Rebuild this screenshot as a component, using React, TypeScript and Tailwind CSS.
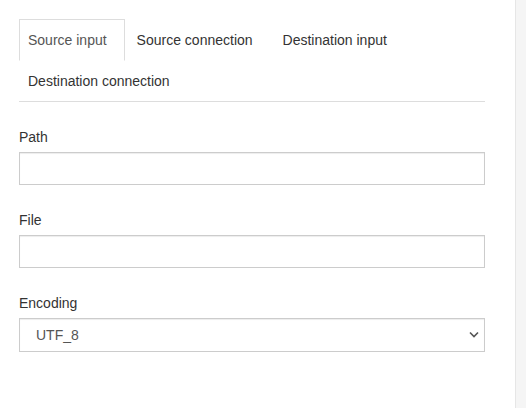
import React from "react";

export default function App() {
  const tabs = ["Source input", "Source connection", "Destination input", "Destination connection"];
  return (
    <div className="flex h-[408px] w-[526px] bg-white font-['Liberation_Sans',Arial,sans-serif] text-[14px] leading-5 text-[#333]">
      <div className="flex-1 pl-[19px] pr-[30px] pt-[19px]">
        <ul className="flex flex-wrap border-b border-[#ddd]">
          {tabs.map((t, i) => (
            <li
              key={t}
              className={
                "-mb-px mr-[3px] border py-[10px] pl-[8px] pr-[17px] " +
                (i === 0
                  ? "border-[#ddd] border-b-transparent bg-white text-[#555]"
                  : "border-transparent text-[#333]")
              }
            >
              {t}
            </li>
          ))}
        </ul>
        <div className="pt-[25px]">
          <div className="mb-[25px]">
            <label className="mb-[5px] block">Path</label>
            <input className="block h-[33px] w-full border border-[#ccc] bg-white px-3 shadow-[inset_0_1px_1px_rgba(0,0,0,0.075)] outline-none" />
          </div>
          <div className="mb-[25px]">
            <label className="mb-[5px] block">File</label>
            <input className="block h-[33px] w-full border border-[#ccc] bg-white px-3 shadow-[inset_0_1px_1px_rgba(0,0,0,0.075)] outline-none" />
          </div>
          <div>
            <label className="mb-[5px] block">Encoding</label>
            <div className="relative">
              <select className="block h-[34px] w-full appearance-none border border-[#ccc] bg-white pl-[16px] text-[#555] shadow-[inset_0_1px_1px_rgba(0,0,0,0.075)] outline-none">
                <option>UTF_8</option>
              </select>
              <svg
                className="pointer-events-none absolute right-[6px] top-[13px]"
                width="10"
                height="7"
                viewBox="0 0 10 7"
              >
                <path d="M1 1.5 L5 5.5 L9 1.5" fill="none" stroke="#555" strokeWidth="1.6" />
              </svg>
            </div>
          </div>
        </div>
      </div>
      <div className="w-[11px] border-l border-[#e6e6e6] bg-[#f5f5f5]" />
    </div>
  );
}
